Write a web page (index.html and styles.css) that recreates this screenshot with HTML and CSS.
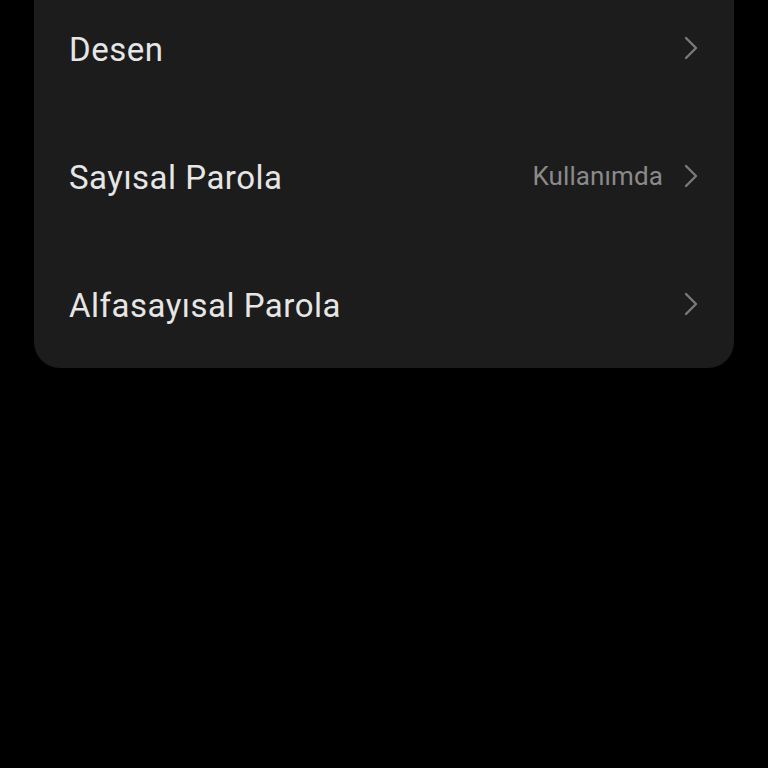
FILE: index.html
```html
<!DOCTYPE html>
<html lang="tr">
<head>
<meta charset="utf-8">
<link rel="stylesheet" href="styles.css">
</head>
<body>
<div class="card">
  <div class="row">
    <span class="label">Desen</span>
    <span class="right">
      <svg class="chev" viewBox="0 0 14 24" width="14" height="24"><path d="M2 2 L12 12 L2 22" fill="none" stroke="#7a7a7a" stroke-width="2.4" stroke-linecap="round" stroke-linejoin="round"/></svg>
    </span>
  </div>
  <div class="row">
    <span class="label">Sayısal Parola</span>
    <span class="right">
      <span class="status">Kullanımda</span>
      <svg class="chev" viewBox="0 0 14 24" width="14" height="24"><path d="M2 2 L12 12 L2 22" fill="none" stroke="#7a7a7a" stroke-width="2.4" stroke-linecap="round" stroke-linejoin="round"/></svg>
    </span>
  </div>
  <div class="row">
    <span class="label">Alfasayısal Parola</span>
    <span class="right">
      <svg class="chev" viewBox="0 0 14 24" width="14" height="24"><path d="M2 2 L12 12 L2 22" fill="none" stroke="#7a7a7a" stroke-width="2.4" stroke-linecap="round" stroke-linejoin="round"/></svg>
    </span>
  </div>
</div>
</body>
</html>
```

FILE: styles.css
```css
html, body {
  margin: 0;
  padding: 0;
  background: #000;
  height: 100%;
  overflow: hidden;
}
body {
  font-family: Roboto, "Noto Sans", sans-serif;
}
.card {
  margin: -16px 34px 0 34px;
  background: #1c1c1c;
  border-radius: 0 0 26px 26px;
  display: flex;
  flex-direction: column;
}
.row {
  height: 128px;
  display: flex;
  align-items: center;
  justify-content: space-between;
  padding: 0 36px 0 35px;
}
.label {
  color: #e6e6e6;
  font-size: 33px;
  letter-spacing: 0.5px;
  position: relative;
  top: 1px;
}
.right {
  display: flex;
  align-items: center;
  gap: 21px;
}
.status {
  color: #8a8a8a;
  font-size: 26px;
  letter-spacing: 0.1px;
}
.chev {
  display: block;
}
```
